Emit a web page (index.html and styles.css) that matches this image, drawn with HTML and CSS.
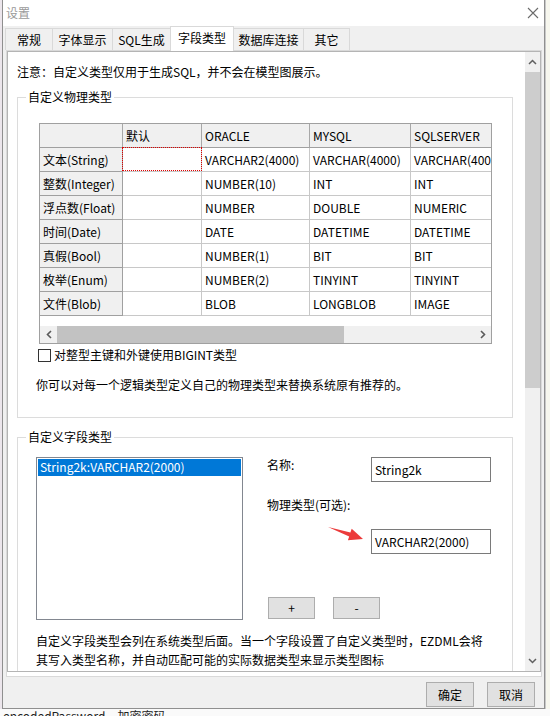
FILE: index.html
```html
<!DOCTYPE html>
<html>
<head>
<meta charset="utf-8">
<link rel="stylesheet" href="styles.css">
</head>
<body>
<div class="screen">
  <div class="main-row">
    <div class="left-edge"></div>
    <div class="dialog">
      <div class="titlebar">
        <span class="title">设置</span>
        <svg class="close" width="12" height="12" viewBox="0 0 12 12"><path d="M1 1 L11 11 M11 1 L1 11" stroke="#6b6b6b" stroke-width="1.1" fill="none"/></svg>
      </div>
      <div class="tabs">
        <div class="tab t1">常规</div>
        <div class="tab t2">字体显示</div>
        <div class="tab t3">SQL生成</div>
        <div class="tab t4 active">字段类型</div>
        <div class="tab t5">数据库连接</div>
        <div class="tab t6">其它</div>
      </div>
      <div class="sheet">
        <div class="scrollbox">
          <div class="content">
            <div class="notice">注意：自定义类型仅用于生成SQL，并不会在模型图展示。</div>

            <div class="group g1">
              <div class="group-label">自定义物理类型</div>
              <div class="grid">
                <div class="rows">
                  <div class="row"><div class="c fx"></div><div class="c fx">默认</div><div class="c fx">ORACLE</div><div class="c fx">MYSQL</div><div class="c fx">SQLSERVER</div></div>
                  <div class="row"><div class="c fx">文本(String)</div><div class="c sel"></div><div class="c">VARCHAR2(4000)</div><div class="c">VARCHAR(4000)</div><div class="c">VARCHAR(4000)</div></div>
                  <div class="row"><div class="c fx">整数(Integer)</div><div class="c"></div><div class="c">NUMBER(10)</div><div class="c">INT</div><div class="c">INT</div></div>
                  <div class="row"><div class="c fx">浮点数(Float)</div><div class="c"></div><div class="c">NUMBER</div><div class="c">DOUBLE</div><div class="c">NUMERIC</div></div>
                  <div class="row"><div class="c fx">时间(Date)</div><div class="c"></div><div class="c">DATE</div><div class="c">DATETIME</div><div class="c">DATETIME</div></div>
                  <div class="row"><div class="c fx">真假(Bool)</div><div class="c"></div><div class="c">NUMBER(1)</div><div class="c">BIT</div><div class="c">BIT</div></div>
                  <div class="row"><div class="c fx">枚举(Enum)</div><div class="c"></div><div class="c">NUMBER(2)</div><div class="c">TINYINT</div><div class="c">TINYINT</div></div>
                  <div class="row"><div class="c fx">文件(Blob)</div><div class="c"></div><div class="c">BLOB</div><div class="c">LONGBLOB</div><div class="c">IMAGE</div></div>
                </div>
                <div class="hscroll">
                  <div class="harrow"><svg width="6" height="9" viewBox="0 0 6 9"><path d="M5 1 L1.5 4.5 L5 8" stroke="#5a5a5a" stroke-width="1.6" fill="none"/></svg></div>
                  <div class="hthumb"></div>
                  <div class="htrack"></div>
                  <div class="harrow"><svg width="6" height="9" viewBox="0 0 6 9"><path d="M1 1 L4.5 4.5 L1 8" stroke="#5a5a5a" stroke-width="1.6" fill="none"/></svg></div>
                </div>
              </div>
              <div class="chk-row"><span class="box"></span><span>对整型主键和外键使用BIGINT类型</span></div>
              <div class="hint">你可以对每一个逻辑类型定义自己的物理类型来替换系统原有推荐的。</div>
            </div>

            <div class="group g2">
              <div class="group-label">自定义字段类型</div>
              <div class="g2-body">
                <div class="listbox">
                  <div class="item selected">String2k:VARCHAR2(2000)</div>
                </div>
                <div class="form">
                  <div class="frow"><span class="flabel">名称:</span><div class="input">String2k</div></div>
                  <div class="flabel2">物理类型(可选):</div>
                  <div class="input input2">VARCHAR2(2000)</div>
                  <div class="btns">
                    <div class="sbtn">+</div>
                    <div class="sbtn">-</div>
                  </div>
                </div>
              </div>
              <div class="para">自定义字段类型会列在系统类型后面。当一个字段设置了自定义类型时，EZDML会将<br>其写入类型名称，并自动匹配可能的实际数据类型来显示类型图标</div>
              <svg class="arrow" width="45" height="26" viewBox="0 0 45 26"><polygon points="5,7 27.4,12.6 28.7,8.8 40,19 24.9,20.2 26.2,16.4" fill="#ec3b3b"/></svg>
            </div>
          </div>
          <div class="vscroll">
            <div class="varrow"><svg width="9" height="6" viewBox="0 0 9 6"><path d="M1 5 L4.5 1.5 L8 5" stroke="#606060" stroke-width="1.5" fill="none"/></svg></div>
            <div class="vthumb"></div>
            <div class="vtrack"></div>
            <div class="varrow"><svg width="9" height="6" viewBox="0 0 9 6"><path d="M1 1 L4.5 4.5 L8 1" stroke="#606060" stroke-width="1.5" fill="none"/></svg></div>
          </div>
        </div>
      </div>
      <div class="footer">
        <div class="btn">确定</div>
        <div class="btn">取消</div>
      </div>
    </div>
    <div class="right-edge"></div>
  </div>
  <div class="bottom-strip"><span class="bg-text">encodedPassword</span><span class="bg-text cn">加密密码</span></div>
</div>
</body>
</html>
```

FILE: styles.css
```css
* { box-sizing: border-box; }
html, body { margin: 0; padding: 0; }
body {
  width: 550px;
  height: 716px;
  overflow: hidden;
  font-family: "Noto Sans CJK SC", "Noto Sans", sans-serif;
  font-size: 12px;
  line-height: 16px;
  color: #000;
  background: #f6f6f6;
}
.screen { width: 550px; height: 716px; display: flex; flex-direction: column; }
.main-row { display: flex; height: 709px; }
.left-edge { width: 2px; background: #ece6ec; }
.right-edge { flex: 1; background: #f7f7ee; border-left: 1px solid #c8c8c8; }

.dialog {
  width: 543px;
  height: 709px;
  border: 1px solid #8f8f8f;
  border-top: none;
  background: #f0f0f0;
  display: flex;
  flex-direction: column;
}
.titlebar {
  height: 26px;
  background: #fff;
  display: flex;
  align-items: center;
  padding-left: 3px;
  padding-right: 5px;
}
.title { color: #9a9a9a; font-size: 12px; }
.close { margin-left: auto; }

.tabs {
  height: 24px;
  display: flex;
  align-items: flex-end;
  padding-left: 2px;
}
.tab {
  height: 22px;
  border: 1px solid #d9d9d9;
  border-bottom: none;
  background: #f0f0f0;
  margin-left: -1px;
  text-align: center;
  line-height: 22px;
  white-space: nowrap;
}
.tab.t1 { margin-left: 0; width: 48px; }
.t2 { width: 61px; }
.t3 { width: 59px; }
.t4 { width: 64px; }
.t5 { width: 71px; }
.t6 { width: 47px; }
.tab.active {
  height: 25px;
  margin-bottom: -1px;
  background: #fff;
  position: relative;
  z-index: 1;
  line-height: 21px;
}

.sheet {
  margin-left: 3px;
  width: 536px;
  height: 627px;
  border: 1px solid #d9d9d9;
  background: #fff;
}
.scrollbox {
  height: 621px;
  border: 1px solid #b4b4b4;
  display: flex;
}
.content {
  width: 517px;
  height: 619px;
  overflow: hidden;
}
.vscroll {
  width: 15px;
  background: #f0f0f0;
  display: flex;
  flex-direction: column;
}
.varrow { height: 20px; display: flex; align-items: center; justify-content: center; }
.vthumb { height: 316px; background: #cdcdcd; }
.vtrack { flex: 1; }

.notice { padding: 12px 0 0 9px; }

.group {
  position: relative;
  margin-left: 9px;
  width: 496px;
  border: 1px solid #dcdcdc;
}
.g1 { margin-top: 17px; height: 321px; }
.g2 { margin-top: 19px; height: 300px; }
.group-label {
  position: absolute;
  left: 8px;
  top: -9px;
  background: #fff;
  padding: 0 2px;
}

.grid {
  margin: 25px 0 0 21px;
  width: 453px;
  height: 221px;
  border: 1px solid #a0a0a0;
  overflow: hidden;
}
.rows { height: 202px; }
.row {
  display: grid;
  grid-template-columns: 83px 79px 108px 101px 101px;
  height: 24px;
}
.c {
  border-right: 1px solid #c8c8c8;
  border-bottom: 1px solid #c8c8c8;
  padding-left: 3px;
  line-height: 23px;
  white-space: nowrap;
  overflow: hidden;
}
.c.fx {
  background: #f0f0f0;
  border-right-color: #a0a0a0;
  border-bottom-color: #a0a0a0;
}
.row:first-child .c.fx { border-right-color: #a8a8a8; }
.sel { position: relative; overflow: visible; }
.sel::after {
  content: "";
  position: absolute;
  left: -1px;
  top: -1px;
  right: -1px;
  bottom: 0;
  border: 1px dotted #e00000;
}
.hscroll {
  height: 17px;
  background: #f0f0f0;
  display: flex;
}
.harrow { width: 17px; display: flex; align-items: center; justify-content: center; }
.hthumb { width: 287px; background: #c2c2c2; }
.htrack { flex: 1; }

.chk-row {
  display: flex;
  align-items: center;
  margin: 3px 0 0 20px;
  height: 16px;
}
.box {
  width: 13px;
  height: 13px;
  border: 1px solid #333;
  background: #fff;
  margin-right: 3px;
}
.hint { margin: 14px 0 0 18px; }

.g2-body {
  display: flex;
  margin: 19px 0 0 18px;
}
.listbox {
  width: 207px;
  height: 163px;
  border: 1px solid #828790;
  padding: 1px;
}
.item { height: 17px; line-height: 16px; padding-left: 2px; }
.item.selected { background: #0078d7; color: #fff; }
.form { margin-left: 24px; display: flex; flex-direction: column; }
.frow { display: flex; }
.flabel { width: 104px; line-height: 16px; }
.input {
  width: 120px;
  height: 25px;
  border: 1px solid #7a7a7a;
  padding-left: 3px;
  line-height: 23px;
  background: #fff;
}
.flabel2 { margin-top: 15px; }
.input2 { margin: 16px 0 0 104px; }
.btns { display: flex; gap: 18px; margin: 43px 0 0 1px; }
.sbtn {
  width: 47px;
  height: 22px;
  background: #e1e1e1;
  border: 1px solid #adadad;
  text-align: center;
  line-height: 20px;
}
.para {
  margin: 11px 0 0 18px;
  line-height: 19px;
  white-space: nowrap;
}
.arrow { position: absolute; left: 305px; top: 82px; }

.footer {
  display: flex;
  justify-content: flex-end;
  gap: 13px;
  padding: 5px 9px 0 0;
}
.btn {
  width: 48px;
  height: 25px;
  background: #e1e1e1;
  border: 1px solid #adadad;
  text-align: center;
  line-height: 23px;
}

.bottom-strip {
  height: 7px;
  overflow: hidden;
  display: flex;
  background: #fafafa;
}
.bg-text { margin-top: -1px; padding-left: 3px; color: #222; line-height: 16px; }
.bg-text.cn { padding-left: 12px; }
```
